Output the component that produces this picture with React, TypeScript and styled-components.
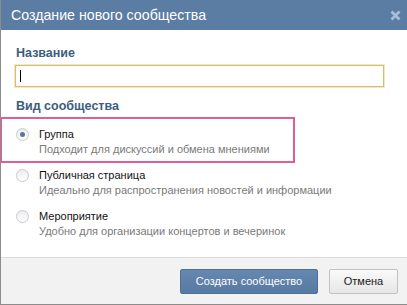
import styled, { createGlobalStyle } from "styled-components";

const GlobalStyle = createGlobalStyle`
  html, body {
    margin: 0;
    padding: 0;
    background: #ffffff;
  }
`;

const options = [
  { title: "Группа", desc: "Подходит для дискуссий и обмена мнениями" },
  { title: "Публичная страница", desc: "Идеально для распространения новостей и информации" },
  { title: "Мероприятие", desc: "Удобно для организации концертов и вечеринок" },
];

export default function App() {
  const selected = 0;

  return (
    <>
      <GlobalStyle />
      <S.Dialog>
        <S.Header>
          <S.Title>Создание нового сообщества</S.Title>
          <S.Close aria-label="close">
            <svg width="11" height="11" viewBox="0 0 11 11">
              <path d="M1.5 1.5 L9.5 9.5 M9.5 1.5 L1.5 9.5" stroke="#a7bedb" strokeWidth="2.8" />
            </svg>
          </S.Close>
        </S.Header>

        <S.Body>
          <S.Label>Название</S.Label>
          <S.Field>
            <S.Input autoFocus />
            <S.Caret />
          </S.Field>

          <S.Label $top={11}>Вид сообщества</S.Label>
          <S.Options>
            {options.map((o, i) => (
              <S.Option key={o.title}>
                <S.Radio $checked={i === selected} />
                <S.OptionText>
                  <S.OptionTitle>{o.title}</S.OptionTitle>
                  <S.OptionDesc>{o.desc}</S.OptionDesc>
                </S.OptionText>
              </S.Option>
            ))}
          </S.Options>
          <S.Highlight />
        </S.Body>

        <S.Footer>
          <S.PrimaryButton>Создать сообщество</S.PrimaryButton>
          <S.SecondaryButton>Отмена</S.SecondaryButton>
        </S.Footer>
      </S.Dialog>
    </>
  );
}

const S = {
  Dialog: styled.div`
    width: 407px;
    height: 305px;
    box-sizing: border-box;
    display: flex;
    flex-direction: column;
    border-left: 1px solid #8c8c8c;
    border-bottom: 1px solid #8c8c8c;
    background: #ffffff;
    overflow: hidden;
    font-family: "Liberation Sans", Arial, sans-serif;
  `,

  Header: styled.div`
    height: 30px;
    flex-shrink: 0;
    margin-left: -1px;
    padding: 0 6px 0 11px;
    display: flex;
    align-items: center;
    justify-content: space-between;
    background: #5b7ca3;
  `,

  Title: styled.div`
    color: #ffffff;
    font-size: 14.2px;
  `,

  Close: styled.div`
    width: 11px;
    height: 11px;
    display: flex;
    cursor: pointer;
  `,

  Body: styled.div`
    position: relative;
    flex: 1;
    padding: 15px 0 0 14px;
  `,

  Label: styled.div<{ $top?: number }>`
    margin-top: ${(p) => p.$top ?? 0}px;
    padding-left: 1px;
    color: #3e5d80;
    font-size: 12.5px;
    font-weight: bold;
    line-height: 16px;
  `,

  Field: styled.div`
    position: relative;
    width: 369px;
    margin-top: 4px;
  `,

  Input: styled.input`
    display: block;
    box-sizing: border-box;
    width: 100%;
    height: 22px;
    padding: 0 4px;
    border: 1px solid #d9bd6e;
    box-shadow: 0 0 0 1px #f5e8c0;
    outline: none;
    font-family: inherit;
    font-size: 11px;
    caret-color: transparent;
  `,

  Caret: styled.span`
    position: absolute;
    left: 5px;
    top: 5px;
    width: 1px;
    height: 12px;
    background: #000000;
    pointer-events: none;
  `,

  Options: styled.div`
    display: flex;
    flex-direction: column;
    gap: 11px;
    margin-top: 13px;
  `,

  Option: styled.label`
    display: flex;
    gap: 10px;
    padding-left: 1px;
    cursor: pointer;
  `,

  Radio: styled.span<{ $checked: boolean }>`
    position: relative;
    width: 13px;
    height: 13px;
    flex-shrink: 0;
    box-sizing: border-box;
    margin-top: 1px;
    border: 1px solid #c4c9cf;
    border-radius: 50%;
    background: linear-gradient(#ececec, #ffffff);

    &::after {
      content: "";
      display: ${(p) => (p.$checked ? "block" : "none")};
      position: absolute;
      left: 3px;
      top: 3px;
      width: 5px;
      height: 5px;
      border-radius: 50%;
      background: #5c7796;
    }
  `,

  OptionText: styled.div`
    display: flex;
    flex-direction: column;
  `,

  OptionTitle: styled.span`
    color: #111111;
    font-size: 11px;
    line-height: 15px;
  `,

  OptionDesc: styled.span`
    color: #7a7a7a;
    font-size: 11px;
    line-height: 15px;
  `,

  Highlight: styled.div`
    position: absolute;
    left: -1px;
    top: 87px;
    width: 295px;
    height: 46px;
    box-sizing: border-box;
    border: 2px solid #e25d96;
    pointer-events: none;
  `,

  Footer: styled.div`
    height: 47px;
    flex-shrink: 0;
    box-sizing: border-box;
    display: flex;
    justify-content: flex-end;
    align-items: center;
    gap: 11px;
    padding: 0 9px 0 0;
    border-top: 1px solid #dbdbdb;
    background: #f2f2f2;
  `,

  PrimaryButton: styled.button`
    width: 138px;
    height: 25px;
    padding: 0;
    border: 1px solid #4f6f96;
    border-radius: 2px;
    background: linear-gradient(#6688b0, #577aa2);
    color: #ffffff;
    font-family: inherit;
    font-size: 11px;
    cursor: pointer;
  `,

  SecondaryButton: styled.button`
    width: 69px;
    height: 25px;
    padding: 0;
    border: 1px solid #c2c2c2;
    border-radius: 2px;
    background: linear-gradient(#fafafa, #e6e6e6);
    color: #222222;
    font-family: inherit;
    font-size: 11px;
    cursor: pointer;
  `,
};
